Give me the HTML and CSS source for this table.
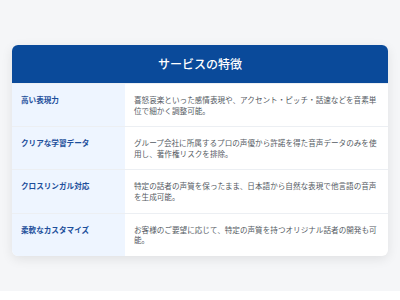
FILE: index.html
```html
<!DOCTYPE html>
<html lang="ja">
<head>
<meta charset="utf-8">
<link rel="stylesheet" href="styles.css">
</head>
<body>
<div class="page">
  <div class="card">
    <div class="card-head">サービスの特徴</div>
    <div class="row">
      <div class="label">高い表現力</div>
      <div class="desc">喜怒哀楽といった感情表現や、アクセント・ピッチ・話速などを音素単位で細かく調整可能。</div>
    </div>
    <div class="row">
      <div class="label">クリアな学習データ</div>
      <div class="desc">グループ会社に所属するプロの声優から許諾を得た音声データのみを使用し、著作権リスクを排除。</div>
    </div>
    <div class="row">
      <div class="label">クロスリンガル対応</div>
      <div class="desc">特定の話者の声質を保ったまま、日本語から自然な表現で他言語の音声を生成可能。</div>
    </div>
    <div class="row">
      <div class="label">柔軟なカスタマイズ</div>
      <div class="desc">お客様のご要望に応じて、特定の声質を持つオリジナル話者の開発も可能。</div>
    </div>
  </div>
</div>
</body>
</html>
```
FILE: styles.css
```css
html, body {
  margin: 0;
  background: #ffffff;
  font-family: "Noto Sans CJK JP", "Noto Sans", sans-serif;
}
.page {
  background: #f5f6f8;
  padding: 45px 12px 35px;
}
.card {
  background: #ffffff;
  border-radius: 6px;
  overflow: hidden;
  box-shadow: 0 3px 12px rgba(0, 0, 0, 0.09);
}
.card-head {
  background: #0a4a9a;
  color: #ffffff;
  font-size: 12px;
  line-height: 38px;
  height: 38px;
  text-align: center;
  font-weight: 500;
}
.row {
  display: grid;
  grid-template-columns: 113px 1fr;
  border-top: 1px solid #eceff3;
}
.row:first-of-type {
  border-top: none;
}
.label {
  background: #eef5ff;
  color: #1d4f9b;
  font-weight: 700;
  font-size: 7.6px;
  line-height: 10.6px;
  padding: 11px 9px 10px;
}
.desc {
  color: #555b63;
  font-size: 7.6px;
  line-height: 10.6px;
  padding: 11px 9px 10px;
}
```
